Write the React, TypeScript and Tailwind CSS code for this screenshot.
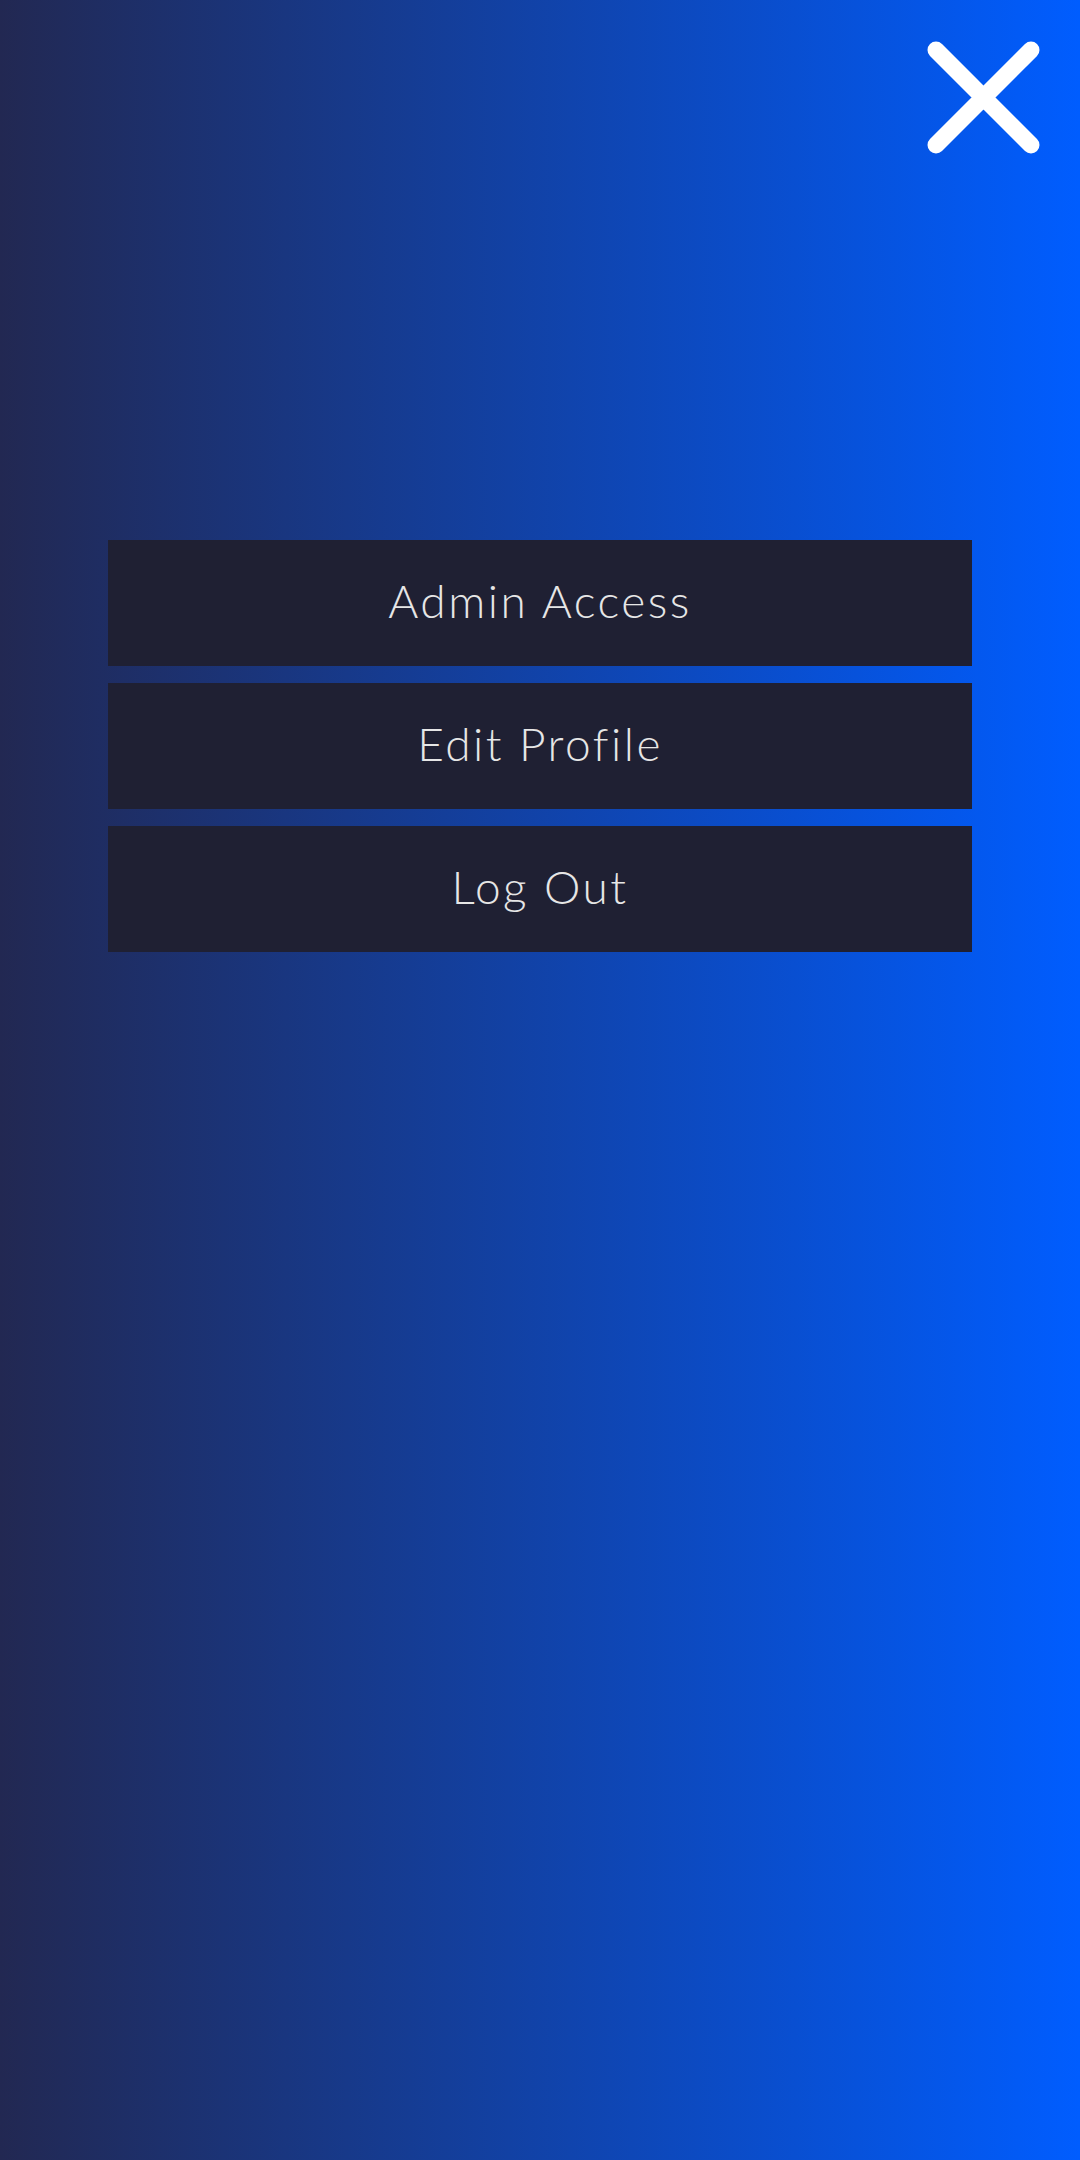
import React from "react";

export default function App() {
  const items = ["Admin Access", "Edit Profile", "Log Out"];
  return (
    <div className="w-[1080px] h-[2160px] bg-[linear-gradient(to_right,#222852,#005dff)] flex flex-col" style={{ fontFamily: "Lato, 'Noto Sans', sans-serif" }}>
      <div className="flex justify-end pt-[41px] pr-[40px]">
        <svg width="113" height="113" viewBox="0 0 113 113">
          <path d="M9 9 L104 104 M104 9 L9 104" stroke="#ffffff" strokeWidth="17" strokeLinecap="round" fill="none" />
        </svg>
      </div>
      <div className="mt-[386px] mx-[108px] flex flex-col gap-[17px]">
        {items.map((t) => (
          <div key={t} className="h-[126px] pb-[5px] bg-[#1f2033] flex items-center justify-center text-[#e6e6e6] text-[46px] font-light tracking-[2.5px]">
            {t}
          </div>
        ))}
      </div>
    </div>
  );
}
